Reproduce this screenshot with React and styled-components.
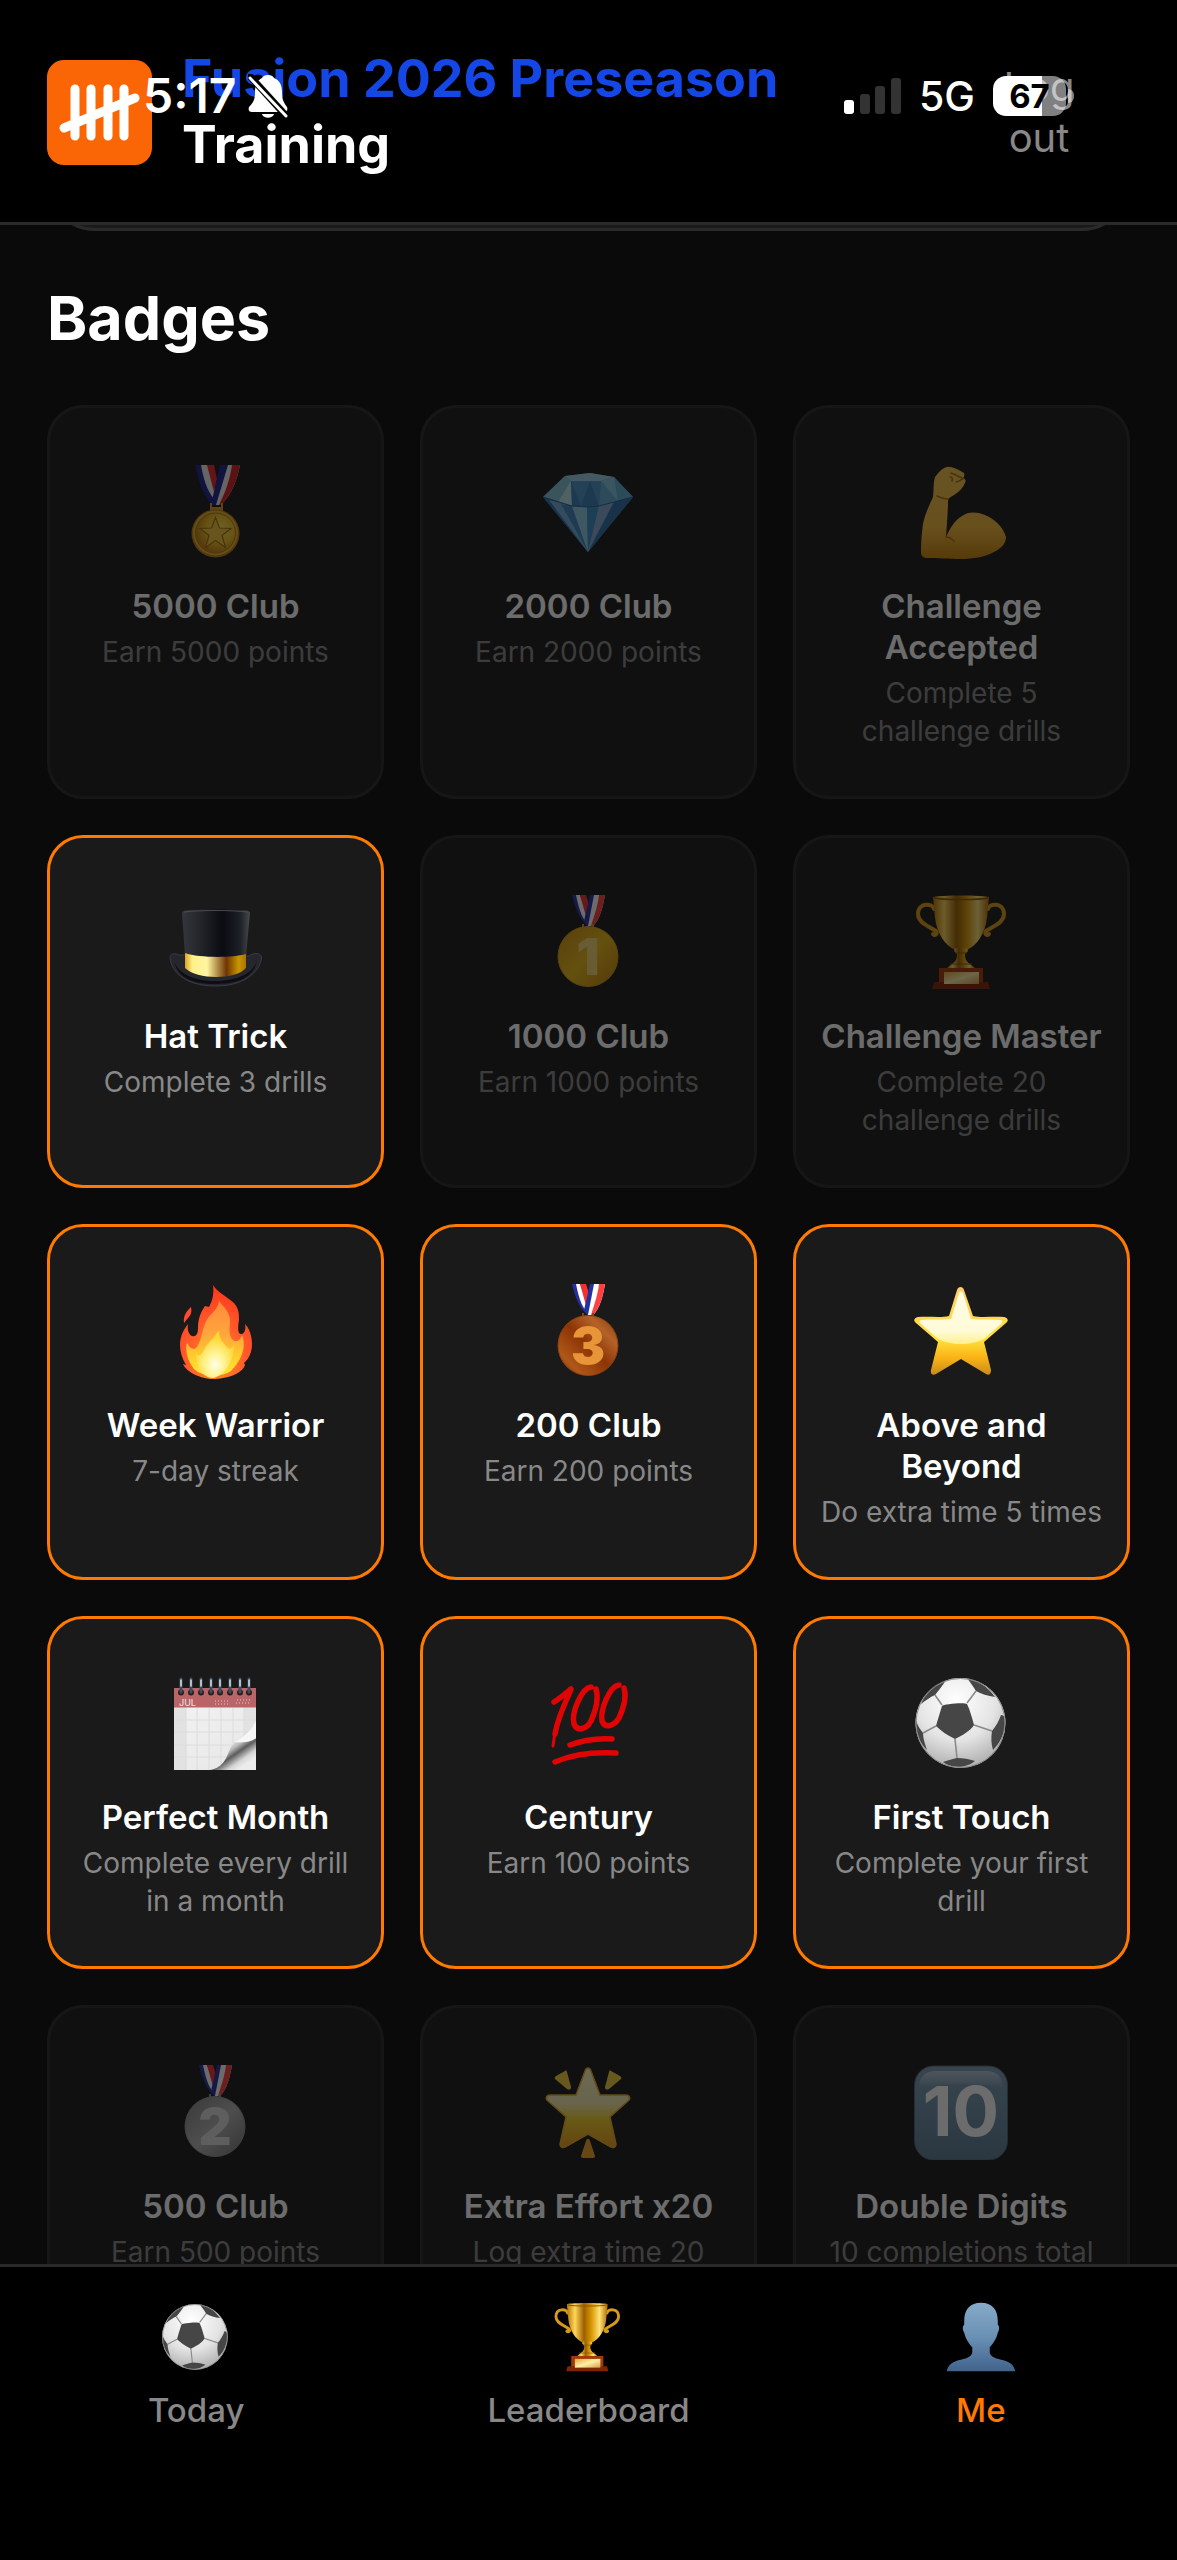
import styled, { createGlobalStyle } from 'styled-components';

const GlobalStyles = createGlobalStyle`
  *, *::before, *::after {
    box-sizing: border-box;
  }
  body {
    margin: 0;
    background: #000;
    color: #fff;
    font-family: Inter, 'Liberation Sans', sans-serif;
  }
  h1, h2, h3, p, ul {
    margin: 0;
    padding: 0;
  }
`;

// gradients shared by all of the badge drawings
function Gradients() {
  return (
    <HiddenSvg width="0" height="0" aria-hidden="true">
      <defs>
        <linearGradient id="goldDisc" x1="0" y1="0" x2="1" y2="1">
          <stop offset="0" stopColor="#d0900e" />
          <stop offset="0.5" stopColor="#eabb18" />
          <stop offset="1" stopColor="#c8800a" />
        </linearGradient>
        <radialGradient id="goldMedal" cx="0.62" cy="0.4" r="0.6">
          <stop offset="0" stopColor="#ffe95a" />
          <stop offset="0.6" stopColor="#f0bd22" />
          <stop offset="1" stopColor="#c88414" />
        </radialGradient>
        <linearGradient id="silverDisc" x1="0" y1="0" x2="1" y2="1">
          <stop offset="0" stopColor="#808080" />
          <stop offset="0.5" stopColor="#b4b4b4" />
          <stop offset="1" stopColor="#747474" />
        </linearGradient>
        <linearGradient id="bronzeDisc" x1="1" y1="0" x2="0" y2="1">
          <stop offset="0" stopColor="#8a3806" />
          <stop offset="0.25" stopColor="#b4622a" />
          <stop offset="0.5" stopColor="#8c3404" />
          <stop offset="0.8" stopColor="#b05818" />
          <stop offset="1" stopColor="#6e2600" />
        </linearGradient>
        <linearGradient id="cup" x1="0" x2="1" y1="0" y2="0">
          <stop offset="0" stopColor="#b87500" />
          <stop offset="0.2" stopColor="#ffd75a" />
          <stop offset="0.42" stopColor="#9c5f00" />
          <stop offset="0.6" stopColor="#d99700" />
          <stop offset="0.8" stopColor="#ffe27a" />
          <stop offset="1" stopColor="#b06c00" />
        </linearGradient>
        <linearGradient id="plaque" x1="0" x2="1" y1="0" y2="1">
          <stop offset="0" stopColor="#e0a93a" />
          <stop offset="0.5" stopColor="#fff0a8" />
          <stop offset="1" stopColor="#d6a04a" />
        </linearGradient>
        <linearGradient id="crown" x1="0" x2="1" y1="0" y2="0">
          <stop offset="0" stopColor="#34363b" />
          <stop offset="0.25" stopColor="#24262b" />
          <stop offset="0.6" stopColor="#0b0b12" />
          <stop offset="0.85" stopColor="#1c1f25" />
          <stop offset="1" stopColor="#454a4d" />
        </linearGradient>
        <linearGradient id="hatBand" x1="0" x2="1" y1="0" y2="0">
          <stop offset="0" stopColor="#d9a520" />
          <stop offset="0.12" stopColor="#fff08a" />
          <stop offset="0.36" stopColor="#fff6a0" />
          <stop offset="0.68" stopColor="#6e3500" />
          <stop offset="0.88" stopColor="#c99500" />
          <stop offset="1" stopColor="#a87300" />
        </linearGradient>
        <linearGradient id="skin" x1="0" x2="0" y1="0" y2="1">
          <stop offset="0" stopColor="#f2bf4c" />
          <stop offset="0.65" stopColor="#f5b93a" />
          <stop offset="1" stopColor="#c8840a" />
        </linearGradient>
        <radialGradient id="flame" cx="0.5" cy="0.8" r="0.75">
          <stop offset="0" stopColor="#ff9a1c" />
          <stop offset="0.55" stopColor="#ff5a2c" />
          <stop offset="1" stopColor="#ff3a1c" />
        </radialGradient>
        <linearGradient id="flameMid" x1="0" x2="0" y1="0" y2="1">
          <stop offset="0" stopColor="#ff8a3c" />
          <stop offset="0.45" stopColor="#ffa63c" />
          <stop offset="0.8" stopColor="#ffd428" />
          <stop offset="1" stopColor="#ffe83c" />
        </linearGradient>
        <radialGradient id="flameCore" cx="0.5" cy="0.72" r="0.55">
          <stop offset="0" stopColor="#fffde8" />
          <stop offset="0.4" stopColor="#fff59a" />
          <stop offset="1" stopColor="#ffd838" />
        </radialGradient>
        <linearGradient id="star" x1="0" x2="0" y1="0" y2="1">
          <stop offset="0" stopColor="#ffce6a" />
          <stop offset="0.6" stopColor="#ffe03c" />
          <stop offset="0.8" stopColor="#fbb416" />
          <stop offset="1" stopColor="#c98a1c" />
        </linearGradient>
        <linearGradient id="starShine" x1="0" x2="0" y1="0" y2="1">
          <stop offset="0" stopColor="#fffbe6" />
          <stop offset="0.75" stopColor="#fffbd8" />
          <stop offset="1" stopColor="#fff08c" />
        </linearGradient>
        <linearGradient id="glowStar" x1="0" x2="0" y1="0" y2="1">
          <stop offset="0" stopColor="#fff7c0" />
          <stop offset="0.45" stopColor="#f7ecae" />
          <stop offset="0.65" stopColor="#f2d228" />
          <stop offset="1" stopColor="#ef9a1a" />
        </linearGradient>
        <radialGradient id="ball" cx="0.45" cy="0.25" r="0.8">
          <stop offset="0" stopColor="#ffffff" />
          <stop offset="0.55" stopColor="#e4e4e4" />
          <stop offset="1" stopColor="#a8a8a8" />
        </radialGradient>
        <linearGradient id="paper" x1="0" x2="1" y1="0" y2="1">
          <stop offset="0" stopColor="#f2f2f2" />
          <stop offset="1" stopColor="#e6e6e6" />
        </linearGradient>
        <linearGradient id="curl" x1="0.2" x2="0.75" y1="0.3" y2="0.85">
          <stop offset="0" stopColor="#ffffff" />
          <stop offset="0.3" stopColor="#b8b8b8" />
          <stop offset="0.5" stopColor="#5c5c5c" />
          <stop offset="0.8" stopColor="#d6d6d6" />
          <stop offset="1" stopColor="#ececec" />
        </linearGradient>
        <linearGradient id="keycap" x1="0" x2="0" y1="0" y2="1">
          <stop offset="0" stopColor="#7c9cb4" />
          <stop offset="0.4" stopColor="#7092ac" />
          <stop offset="1" stopColor="#5c7c94" />
        </linearGradient>
        <linearGradient id="keycapShine" x1="0" x2="0" y1="0" y2="1">
          <stop offset="0" stopColor="#fff" stopOpacity="0.45" />
          <stop offset="1" stopColor="#fff" stopOpacity="0" />
        </linearGradient>
        <linearGradient id="person" x1="0" x2="0" y1="0" y2="1">
          <stop offset="0" stopColor="#86abc9" />
          <stop offset="0.5" stopColor="#6a90b4" />
          <stop offset="1" stopColor="#41638c" />
        </linearGradient>
      </defs>
    </HiddenSvg>
  );
}

function PlaceMedal({ place, disc, ink, edge }) {
  return (
    <>
      <path d="M31 1h9l7 20-1 10c-8-6-12-18-15-30z" fill="#2430a0" />
      <path d="M35 1h4l8 22-1 6c-6-6-9-18-11-28z" fill="#fff" />
      <path d="M39 1h6l4 13-3 12z" fill="#f23030" />
      <path d="M64 1H49l-6 26 3 5h6C59 25 62 13 64 1z" fill="#2430a0" />
      <path d="M64 1H53l-6 31h5C59 25 62 13 64 1z" fill="#fff" />
      <path d="M64 1h-6c-1 9-4 19-8 31h2C59 25 62 13 64 1z" fill="#ff4040" />
      <path d="M42 34v-4M52 34v-4" stroke={edge} strokeWidth="2" />
      <circle cx="47" cy="62.5" r="30" fill={disc} stroke={edge} strokeWidth="1" />
      <MedalDigit x="47" y="81" fill={ink}>
        {place}
      </MedalDigit>
    </>
  );
}

const GoldMedal = () => (
  <PlaceMedal place="1" disc="url(#goldDisc)" ink="#f3d670" edge="#c99a1c" />
);
const SilverMedal = () => (
  <PlaceMedal place="2" disc="url(#silverDisc)" ink="#dcdcdc" edge="#909090" />
);
const BronzeMedal = () => (
  <PlaceMedal place="3" disc="url(#bronzeDisc)" ink="#e89438" edge="#8a4210" />
);

function StarMedal() {
  return (
    <>
      <path d="M27.5 1h10l9 27-2 13C35 33 30 16 27.5 1z" fill="#1c2390" />
      <path d="M33 1h7l8 26-2 8C39 27 35 13 33 1z" fill="#eee" />
      <path d="M39 1h7l3 14-3 13z" fill="#e02828" />
      <path d="M72 1H52l-9 40h10C64 30 69 16 72 1z" fill="#1c2390" />
      <path d="M72 1H60L48 41h5C64 30 69 16 72 1z" fill="#eee" />
      <path d="M72 1h-8c-2 14-6 26-13 40h2C64 30 69 16 72 1z" fill="#d82020" />
      <path d="M42 48v-9h2v4h9v-4h2v9z" fill="#d79a18" />
      <circle cx="47.5" cy="69.5" r="24" fill="#b87a14" />
      <circle cx="47.5" cy="69" r="22.5" fill="#e8b42a" />
      <circle cx="47.5" cy="69" r="20" fill="url(#goldMedal)" stroke="#b8780e" strokeWidth="1" />
      <path
        d="M47.5 53.5l4 10.500 11.500.5-9 7 3.500 12-10-7-10 7 3.500-12-9-7 11.500-.5z"
        fill="#efc83c"
        stroke="#a8700c"
        strokeWidth="1.2"
      />
    </>
  );
}

function Diamond() {
  return (
    <>
      <path d="M2 33l22-21 25-3 24 4 19 20-45 55z" fill="#4f9ccb" />
      <path d="M24 12l25-3 24 4-13 4H30z" fill="#9ccfe4" />
      <path d="M24 12l6 5-2 23L2 33z" fill="#86c4d8" />
      <path d="M30 17L17 38l14 4z" fill="#b6e4e8" />
      <path d="M30 17h30l-2 25-12 1-15-1z" fill="#3b7fb8" />
      <path d="M30 17l10 25 9-25 9 25 2-25z" fill="#4d94ca" />
      <path d="M73 13l19 20-34 9 2-25z" fill="#5eaad2" />
      <path d="M60 17l13-4 4 24z" fill="#83c3e0" />
      <path d="M2 33l29 9 16 46z" fill="#2b6fb0" />
      <path d="M8 36l23 6 16 46z" fill="#72aed6" />
      <path d="M20 40l11 2 16 46z" fill="#3c86be" />
      <path d="M31 42l15 1 1 45z" fill="#8fcbe0" />
      <path d="M46 43l12-1-11 46z" fill="#3b8fc8" />
      <path d="M58 42l15-4-26 50z" fill="#86a9d2" />
      <path d="M73 38l19-5-45 55z" fill="#2f70a8" />
      <path d="M2 33l29 9 15 1 12-1 34-9" fill="none" stroke="#27609a" strokeWidth="1" />
    </>
  );
}

function Arm() {
  return (
    <>
      <path
        d="M33 3c4-1 12 3 17 6 1 2 0 4-1 5 3 1 3 3 2 5-2 5-6 9-11 12-3 2-6 3-6 6 0 10-1 21-2 36 4-9 9-17 16-21 5-4 11-4 17-3 15 4 24 14 27 24 0 6-4 11-12 15-9 5-22 7-32 7-14 0-26-1-34-1-5 0-7-2-7-6 0-12 1-20 2-28 2-10 6-18 10-27 1-7 0-13 2-20 3-4 7-9 12-10z"
        fill="url(#skin)"
      />
      <path
        d="M34 35c-5 0-8-2-11-3M32 73c4 0 6 2 8 4M37 9c3 1 7 3 11 5M36 13c2 0 3 1 2 4M42 18c2 0 4-2 7-3"
        fill="none"
        stroke="#a8700c"
        strokeWidth="1.6"
        strokeLinecap="round"
      />
    </>
  );
}

function TopHat() {
  return (
    <>
      <path
        d="M2 63c1-4 5-4 9-2l70 1c4-3 11-4 12.500 1 0 10-12 29-46 29S2 74 2 63z"
        fill="#26272c"
        stroke="#3b3c42"
        strokeWidth="1"
      />
      <path d="M6 67c4 12 18 20 41 20s38-8 42-20c-3 14-15 23-42 23S9 81 6 67z" fill="#0d0d14" />
      <path d="M14 19c0-2 2-2 6-3 16-1 38-1 54 0 5 0 8 1 8 3l-4 43c-16 4-45 4-61 0z" fill="url(#crown)" />
      <path d="M16 18c16-2 48-2 64 0" fill="none" stroke="#4a4c52" strokeWidth="1" />
      <path d="M17 59c14 5 47 5 61 1v14c-10 12-49 12-61 0z" fill="url(#hatBand)" />
    </>
  );
}

function Trophy() {
  return (
    <>
      <g fill="none" stroke="#d99a18" strokeWidth="4" strokeLinecap="round">
        <path d="M20 15c-1-6-16-7-16 5 0 9 11 12 18 17 2 3-1 5-3 3" />
        <path d="M74 15c1-6 16-7 16 5 0 9-11 12-18 17-2 3 1 5 3 3" />
      </g>
      <path d="M19 3c8-2 48-2 56 0l-2 21c-2 16-10 27-20 32H41c-10-5-18-16-20-32z" fill="url(#cup)" />
      <path d="M20 4c9 2 45 2 54 0" fill="none" stroke="#8c5600" strokeWidth="1.5" />
      <path d="M41 54h12l1 3-3 3c0 6 2 8 5 10l5 4H33l5-4c3-2 5-4 5-10l-3-3z" fill="url(#cup)" />
      <path d="M41 59h12M36 70h22" stroke="#8c5600" strokeWidth="1" />
      <path d="M25 74h44v15h-44z" fill="#a23a08" />
      <path d="M20 88h54l2 7H18z" fill="#7c2604" />
      <path d="M30 78h35v12H30z" fill="url(#plaque)" />
    </>
  );
}

function Fire() {
  return (
    <>
      <path d="M23 24c1 5 0 8-3 11l-4 5c-1-8 3-12 7-16z" fill="#ff4a30" />
      <path
        d="M45 2c4 7 13 11 21 18 5 6 5 11 5 17-1 6-2 15 3 14 3-1 4-6 3-10 5 5 7 13 7 20 0 8-3 15-8 19l1 2c-3 9-19 14-32 14-12 0-27-7-30-15l3 1c-4-7-6-13-6-20 0-9 4-16 8-21-1 6 1 11 4 12 4 1 6-2 6-8 0-10 3-16 7-22l4 1c4-7 5-14 4-22z"
        fill="url(#flame)"
      />
      <path
        d="M51 18c7 8 12 14 11 22-1 8-1 14 4 18 5 1 7-3 8-6 5 12-1 26-11 36-10 7-29 6-37-2-7-9-9-19-7-27 2 6 7 9 10 5 5-7 5-20 11-29 6-7 10-10 11-17z"
        fill="url(#flameMid)"
      />
      <path
        d="M51 47c0 9 4 13 9 18 2 2 5-1 6-3 0 15-9 31-21 33-10 0-17-11-17-25 2 4 5 3 7-1 3-8 11-14 16-22z"
        fill="url(#flameCore)"
      />
    </>
  );
}

function Star() {
  return (
    <>
      <path
        d="M43 7c1-4 6-4 7 0l9 26c9 2 20 0 31 1 4 1 5 4 2 6L70 59l7 28c0 4-2 6-5 4L47 76 22 91c-3 2-6 0-5-4l7-28L2 40c-3-2-2-5 2-6 11-1 22 1 31-1z"
        fill="url(#star)"
      />
      <path
        d="M45 10c0-2 3-2 4 0l8 26c11 1 20 0 30 1 2 1 2 2 0 4L71 55c-12 8-36 8-48 0L7 41c-2-2-2-3 0-4 10-1 19 0 30-1z"
        fill="url(#starShine)"
      />
    </>
  );
}

function GlowingStar() {
  return (
    <>
      <path
        d="M44 7c1-4 5-4 6 0l9 24 26 0c4 0 5 4 2 6L69 53l6 27c0 3-2 4-5 3L47 70 24 83c-3 1-5 0-5-3l6-27L7 37c-3-2-2-6 2-6l26 0z"
        fill="url(#glowStar)"
        stroke="#e8a92c"
        strokeWidth="1.5"
      />
      <path d="M24 7c1-1 2 0 2 1l4 15c0 3-2 3-4 2L14 15c-1-1 0-2 1-3z" fill="#f2cf3c" />
      <path d="M70 7c-1-1-2 0-2 1l-4 15c0 3 2 3 4 2l12-10c1-1 0-2-1-3z" fill="#f2cf3c" />
      <path d="M45 77c1-3 3-3 4 0l5 15c0 1-1 2-2 2H42c-1 0-2-1-2-2z" fill="#f0a42a" />
    </>
  );
}

const ringPositions = [13, 23, 33, 43, 52, 62, 72, 81];

function Calendar() {
  return (
    <>
      <path d="M6 32h82v63H6z" fill="url(#paper)" />
      <path d="M6 32h12v63H6zM76 32h12v63H76z" fill="#e2e2e2" />
      <path
        d="M18 33v62M29 33v62M41 33v62M53 33v62M65 33v62M76 33v62M6 45h82M6 57h82M6 70h82M6 82h82"
        stroke="#dcdcdc"
        strokeWidth="1"
      />
      <path d="M88 63v32H42c14-2 17-14 20-21 1-3 3-5 5-7 8 1 16 0 21-4z" fill="url(#curl)" />
      <path d="M88 46v17c-5 4-13 5-21 4 8-4 16-11 21-21z" fill="#f7f7f7" />
      <path d="M6 13h82v19.5H6z" fill="#b96466" />
      <path
        d="M47 26h15M47 29h15M69 25h15M68 28h15"
        stroke="#d8a4a4"
        strokeWidth="1.5"
        strokeDasharray="1 2"
      />
      <MonthLabel x="11" y="31">
        JUL
      </MonthLabel>
      {ringPositions.map((x) => (
        <g key={x}>
          <circle cx={x} cy="17.5" r="3" fill="#2a1c1e" />
          <path d={`M${x} 4v13`} stroke="#3c5062" strokeWidth="3" strokeLinecap="round" />
          <path d={`M${x} 5v6`} stroke="#e8f0f8" strokeWidth="1.4" strokeLinecap="round" />
        </g>
      ))}
    </>
  );
}

function Hundred() {
  return (
    <g fill="none" stroke="#e00404" strokeWidth="5.5" strokeLinecap="round" strokeLinejoin="round">
      <path d="M13 27c6-4 12-9 17-13-5 13-13 27-16 45" />
      <path d="M14 57l-2 14" strokeWidth="3" />
      <path d="M50 12c-9 1-20 25-17 37 3 8 13 5 17-3 5-11 8-22 5-32" />
      <path d="M78 10c-9 1-19 24-17 36 3 8 12 5 17-3 5-11 8-21 5-30" />
      <path d="M29 70c14-5 28-7 42-6" />
      <path d="M14 87c18-8 40-10 61-9" />
    </g>
  );
}

function SoccerBall() {
  return (
    <>
      <circle cx="46.5" cy="48" r="45" fill="url(#ball)" />
      <g fill="none" stroke="#8a8a8a" strokeWidth="1.6">
        <path d="M28 30l-7-10M53 28l9-12M60 50l18 6M41 64l2 19M22 51L9 58" />
      </g>
      <g fill="#464646">
        <path d="M28 31c1-2 23-4 25-2 3 6 5 14 7 21-4 6-11 10-19 14-8-4-14-8-19-13 2-7 4-14 6-20z" />
        <path d="M53 3c11 2 20 8 28 19-7-1-14-3-19-6-3-5-6-9-9-13z" />
        <path d="M32 5c-3 5-7 10-11 15-5 2-10 6-14 9C11 17 20 9 32 5z" />
        <path d="M87 40c4 0 4 4 4 10-1 9-5 18-12 25-2-6-2-13-1-19 4-5 7-10 9-16z" />
        <path d="M29 87c5-2 10-3 14-4 6 0 12 1 18 3-8 7-24 8-32 1z" />
        <path d="M2 45c1 5 4 9 7 13 0 6 2 11 4 17C5 67 1 57 2 45z" />
      </g>
      <circle cx="46.5" cy="48" r="44.5" fill="none" stroke="#8c8c8c" strokeWidth="1" />
    </>
  );
}

function KeycapTen() {
  return (
    <>
      <rect x="0.5" y="2" width="93" height="94" rx="19" fill="url(#keycap)" stroke="#46627a" strokeWidth="1" />
      <path d="M5 24C5 12 12 7 22 7h50c10 0 17 5 17 17-14-5-70-5-84 0z" fill="url(#keycapShine)" />
      <KeycapLabel x="47" y="72">
        10
      </KeycapLabel>
    </>
  );
}

function Person() {
  return (
    <path
      d="M48 1c15 0 23 9 23 25v5c3 3 2 8 0 11-2 9-6 14-11 20v8c3 8 14 8 22 11 9 3 12 9 13 14H1c1-5 4-11 13-14 8-3 19-3 22-11v-8c-5-6-9-11-11-20-2-3-3-8 0-11v-5C25 10 33 1 48 1z"
      fill="url(#person)"
    />
  );
}

const badges = [
  { art: StarMedal, name: '5000 Club', detail: 'Earn 5000 points' },
  { art: Diamond, name: '2000 Club', detail: 'Earn 2000 points' },
  { art: Arm, name: 'Challenge Accepted', detail: 'Complete 5 challenge drills' },
  { art: TopHat, name: 'Hat Trick', detail: 'Complete 3 drills', earned: true },
  { art: GoldMedal, name: '1000 Club', detail: 'Earn 1000 points' },
  { art: Trophy, name: 'Challenge Master', detail: 'Complete 20 challenge drills' },
  { art: Fire, name: 'Week Warrior', detail: '7-day streak', earned: true },
  { art: BronzeMedal, name: '200 Club', detail: 'Earn 200 points', earned: true },
  { art: Star, name: 'Above and Beyond', detail: 'Do extra time 5 times', earned: true },
  { art: Calendar, name: 'Perfect Month', detail: 'Complete every drill in a month', earned: true },
  { art: Hundred, name: 'Century', detail: 'Earn 100 points', earned: true },
  { art: SoccerBall, name: 'First Touch', detail: 'Complete your first drill', earned: true },
  { art: SilverMedal, name: '500 Club', detail: 'Earn 500 points' },
  { art: GlowingStar, name: 'Extra Effort x20', detail: 'Log extra time 20' },
  { art: KeycapTen, name: 'Double Digits', detail: '10 completions total' },
];

const tabs = [
  { art: SoccerBall, label: 'Today' },
  { art: Trophy, label: 'Leaderboard' },
  { art: Person, label: 'Me', active: true },
];

function StatusBar() {
  return (
    <StyledStatusBar>
      <StatusLeft>
        <Clock>5:17</Clock>
        <svg width="40" height="44" viewBox="0 0 40 44" aria-hidden="true">
          <path
            d="M20 1c3 0 5 1 6 3 6 2 8 8 8 14 0 8 2 11 5 15 1 3 0 5-3 5H4c-3 0-4-2-3-5 4-4 6-7 6-15 0-6 2-12 7-14 1-2 3-3 6-3z"
            fill="#fff"
          />
          <path d="M14 40h12c-1 5-11 5-12 0z" fill="#fff" />
          <path d="M0 0l40 44" stroke="#000" strokeWidth="7" />
          <path d="M2 4l36 38" stroke="#fff" strokeWidth="3" strokeLinecap="round" />
        </svg>
      </StatusLeft>
      <StatusRight>
        <svg width="57" height="36" viewBox="0 0 57 36" aria-hidden="true">
          <rect y="22" width="10" height="14" rx="3" fill="#fff" />
          <rect x="16" y="16" width="10" height="20" rx="3" fill="#333" />
          <rect x="31" y="8" width="10" height="28" rx="3" fill="#333" />
          <rect x="47" y="0" width="10" height="36" rx="3" fill="#333" />
        </svg>
        <Network>5G</Network>
        <Battery>
          <BatteryLevel>67</BatteryLevel>
          <BatteryCap />
        </Battery>
      </StatusRight>
    </StyledStatusBar>
  );
}

export default function App() {
  return (
    <Page>
      <GlobalStyles />
      <Gradients />
      <StatusBar />
      <Header>
        <Logo viewBox="0 0 105 105" aria-hidden="true">
          <rect width="105" height="105" rx="17" fill="#fa6605" />
          <path
            d="M28 29v47M44 29v47M61 29v47M77 29v47M17 68l71-30"
            stroke="#fff"
            strokeWidth="9"
            strokeLinecap="round"
          />
        </Logo>
        <TeamTitle>
          <span>Fusion 2026 Preseason</span> Training
        </TeamTitle>
        <LogOut type="button">Log out</LogOut>
      </Header>
      <Main>
        <PreviousPanel />
        <Heading>Badges</Heading>
        <BadgeGrid>
          {badges.map(({ art: Art, name, detail, earned }) => (
            <BadgeCard key={name} $earned={earned}>
              <BadgeArt viewBox="0 0 96 96" aria-hidden="true">
                <Art />
              </BadgeArt>
              <BadgeName>{name}</BadgeName>
              <BadgeDetail>{detail}</BadgeDetail>
            </BadgeCard>
          ))}
        </BadgeGrid>
      </Main>
      <TabBar>
        {tabs.map(({ art: Art, label, active }) => (
          <Tab key={label} href="#" $active={active}>
            <TabArt viewBox="0 0 96 96" aria-hidden="true">
              <Art />
            </TabArt>
            {label}
          </Tab>
        ))}
      </TabBar>
    </Page>
  );
}

const Page = styled.div`
  height: 100vh;
  display: flex;
  flex-direction: column;
  position: relative;
`;

const HiddenSvg = styled.svg`
  position: absolute;
`;

// floats over the header, as the phone draws it
const StyledStatusBar = styled.div`
  position: absolute;
  top: 65px;
  left: 0;
  right: 0;
  height: 62px;
  padding: 0 103px 0 143px;
  display: flex;
  align-items: center;
  justify-content: space-between;
  pointer-events: none;
`;
const StatusLeft = styled.div`
  display: flex;
  align-items: center;
  gap: 12px;
`;
const StatusRight = styled.div`
  display: flex;
  align-items: center;
  gap: 18px;
`;
const Clock = styled.span`
  font-size: 48px;
  font-weight: 600;
  line-height: 60px;
`;
const Network = styled.span`
  font-size: 41px;
  font-weight: 500;
  line-height: 48px;
`;
const Battery = styled.div`
  display: flex;
  align-items: center;
  gap: 2px;
`;
const BatteryLevel = styled.div`
  width: 73px;
  height: 40px;
  border-radius: 13px;
  background: linear-gradient(90deg, #fff 67%, rgba(255, 255, 255, 0.5) 67%);
  color: #000;
  font-size: 33px;
  font-weight: 700;
  line-height: 40px;
  text-align: center;
`;
const BatteryCap = styled.div`
  width: 6px;
  height: 14px;
  border-radius: 0 7px 7px 0;
  background: rgba(255, 255, 255, 0.5);
`;

const Header = styled.header`
  display: flex;
  align-items: center;
  gap: 30px;
  padding: 46px 47px 44px;
  background: #000;
  border-bottom: 3px solid #2a2a2a;
`;
const Logo = styled.svg`
  width: 105px;
  height: 105px;
  flex: none;
`;
const TeamTitle = styled.h1`
  flex: 1;
  font-size: 52px;
  font-weight: 700;
  line-height: 66px;

  span {
    color: #1447e6;
  }
`;
const LogOut = styled.button`
  width: 182px;
  padding: 0 54px;
  border: 0;
  background: none;
  color: #888;
  font: inherit;
  font-size: 40px;
  line-height: 51px;
  text-align: center;
`;

const Main = styled.main`
  flex: 1;
  min-height: 0;
  overflow: hidden;
  padding: 0 47px;
  background: #0a0a0a;
`;
const PreviousPanel = styled.section`
  height: 120px;
  margin-top: -114px;
  border: 3px solid #2a2a2a;
  border-radius: 48px;
  background: #1a1a1a;
`;
const Heading = styled.h2`
  margin: 51px 0;
  font-size: 61px;
  font-weight: 700;
  line-height: 72px;
`;
const BadgeGrid = styled.div`
  display: grid;
  grid-template-columns: repeat(3, 1fr);
  gap: 36px;
`;
const BadgeCard = styled.article`
  padding: 46px 24px;
  border: 3px solid ${({ $earned }) => ($earned ? '#ff7a00' : '#2a2a2a')};
  border-radius: 36px;
  background: #1a1a1a;
  opacity: ${({ $earned }) => ($earned ? 1 : 0.4)};
  text-align: center;
`;
const BadgeArt = styled.svg`
  display: block;
  width: 96px;
  height: 96px;
  margin: 10px auto 26px;
`;
const BadgeName = styled.h3`
  margin-bottom: 6px;
  font-size: 33px;
  font-weight: 600;
  line-height: 41px;
`;
const BadgeDetail = styled.p`
  color: #888;
  font-size: 28px;
  line-height: 38px;
`;

const MedalDigit = styled.text`
  font-size: 51px;
  font-weight: 900;
  text-anchor: middle;
`;
const MonthLabel = styled.text`
  fill: #f0d8d8;
  font-size: 9px;
  font-weight: 500;
`;
const KeycapLabel = styled.text`
  fill: #fff;
  font-size: 69px;
  font-weight: 700;
  text-anchor: middle;
`;

const TabBar = styled.nav`
  display: flex;
  padding: 35px 0 130px;
  background: #000;
  border-top: 3px solid #2a2a2a;
`;
const Tab = styled.a`
  flex: 1;
  display: flex;
  flex-direction: column;
  align-items: center;
  gap: 18px;
  color: ${({ $active }) => ($active ? '#ff7a00' : '#888')};
  font-size: 33px;
  font-weight: 500;
  line-height: 40px;
  text-decoration: none;
`;
const TabArt = styled.svg`
  width: 70px;
  height: 70px;
`;
